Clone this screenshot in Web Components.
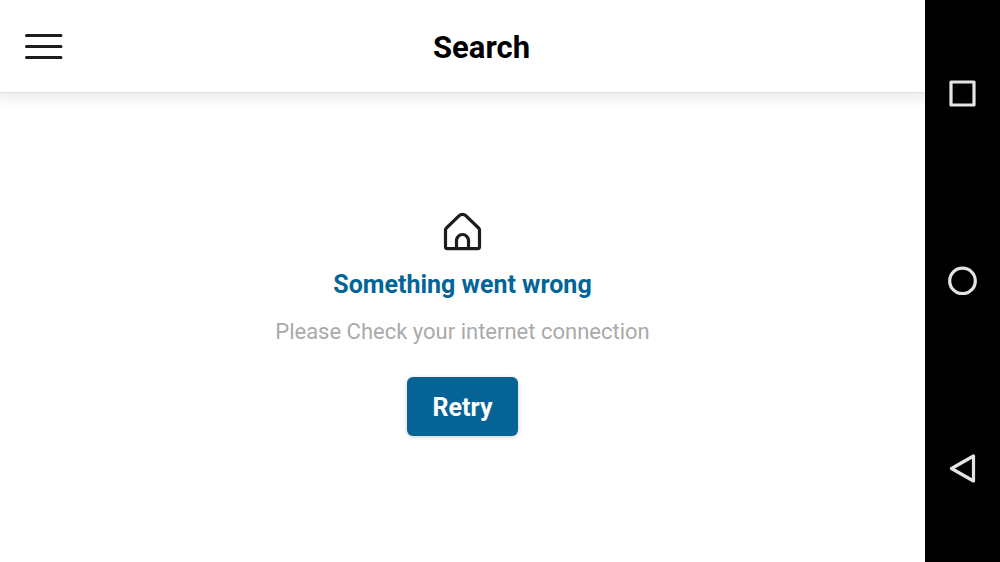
<!DOCTYPE html>
<html lang="en">
<head>
<meta charset="utf-8">
<meta name="viewport" content="width=device-width, initial-scale=1">
<title>Search</title>
<style>
html, body { height: 100%; margin: 0; }
body { font-family: Roboto, "Liberation Sans", sans-serif; background: #fff; color: #000; }
</style>
</head>
<body>
<app-shell>
  <app-header slot="header">Search</app-header>
  <error-state>
    <span slot="title">Something went wrong</span>
    <span slot="message">Please Check your internet connection</span>
    <retry-button slot="action">Retry</retry-button>
  </error-state>
  <system-nav slot="nav"></system-nav>
</app-shell>
<script>
function define(name, html) {
  const template = document.createElement('template');
  template.innerHTML = html;
  customElements.define(name, class extends HTMLElement {
    constructor() {
      super();
      this.attachShadow({ mode: 'open' }).append(template.content.cloneNode(true));
    }
  });
}

define('app-shell', `
<style>
:host { display: flex; min-height: 100%; }
.screen { flex: 1; display: flex; flex-direction: column; min-width: 0; overflow: hidden; }
main { flex: 1; display: flex; flex-direction: column; }
</style>
<div class="screen"><slot name="header"></slot><main><slot></slot></main></div>
<slot name="nav"></slot>`);

define('app-header', `
<style>
:host { display: block; background: #fff; box-shadow: 0 1px 0 rgba(0,0,0,.05), 0 3px 10px 4px rgba(0,0,0,.08); }
header { display: grid; grid-template-columns: 88px 1fr 50px; align-items: center; height: 92px; }
button { border: 0; background: none; padding: 0 0 0 24px; margin: 0; display: flex; }
h1 { margin: 0; font-size: 31px; line-height: 40px; font-weight: 700; text-align: center; padding-top: 4px; }
</style>
<header>
  <button type="button" aria-label="Open menu">
    <svg width="40" height="28" viewBox="0 0 40 28" fill="none" stroke="#1d1d1f" stroke-width="3" stroke-linecap="round"><path d="M2.5 3.5H37M2.5 14.5H37M2.5 25.5H37"/></svg>
  </button>
  <h1><slot></slot></h1>
</header>`);

define('error-state', `
<style>
:host { flex: 1; display: flex; flex-direction: column; align-items: center; justify-content: center; padding-bottom: 6px; }
svg { display: block; }
h2 { margin: 18px 0 0; font-size: 25px; line-height: 32px; font-weight: 700; color: #026597; }
p { margin: 16px 0 30px; font-size: 22px; line-height: 30px; color: #aaa; }
</style>
<svg width="39" height="39" viewBox="0 0 39 39" fill="none" stroke="#1d1d1f" stroke-width="3.2" stroke-linejoin="round" aria-hidden="true">
  <path d="M2.5 18Q2.5 16.8 3.4 16L16 3.8Q19.5 1.1 23 3.8L35.6 16Q36.5 16.8 36.5 18V34.7Q36.5 36.7 34.5 36.7H4.5Q2.5 36.7 2.5 34.7Z"/>
  <path d="M13.5 36.5V28.5a6 6 0 0 1 12 0V36.5"/>
</svg>
<h2><slot name="title"></slot></h2>
<p><slot name="message"></slot></p>
<slot name="action"></slot>`);

define('retry-button', `
<style>
:host { display: block; }
button { display: block; border: 0; border-radius: 6px; padding: 15px 26px 12px; background: #056495; color: #fff; font: 700 25px/32px Roboto, "Liberation Sans", sans-serif; box-shadow: 0 1px 4px rgba(0,0,0,.2); }
</style>
<button type="button"><slot></slot></button>`);

define('system-nav', `
<style>
:host { display: flex; width: 75px; background: #000; }
nav { flex: 1; display: flex; flex-direction: column; }
button { flex: 1; border: 0; padding: 0; margin: 0; background: none; display: grid; place-items: center; }
svg { display: block; fill: none; stroke: #e4e4e4; stroke-width: 3.2; stroke-linejoin: round; }
</style>
<nav aria-label="System">
  <button type="button" aria-label="Recent apps"><svg width="29" height="29" viewBox="0 0 29 29"><path d="M3 3h23v23H3z"/></svg></button>
  <button type="button" aria-label="Home"><svg width="29" height="29" viewBox="0 0 29 29"><circle cx="14.5" cy="14.9" r="12.8"/></svg></button>
  <button type="button" aria-label="Back"><svg width="29" height="29" viewBox="0 0 29 29"><path d="M3.5 14.5L25.5 2v25z"/></svg></button>
</nav>`);
</script>
</body>
</html>
